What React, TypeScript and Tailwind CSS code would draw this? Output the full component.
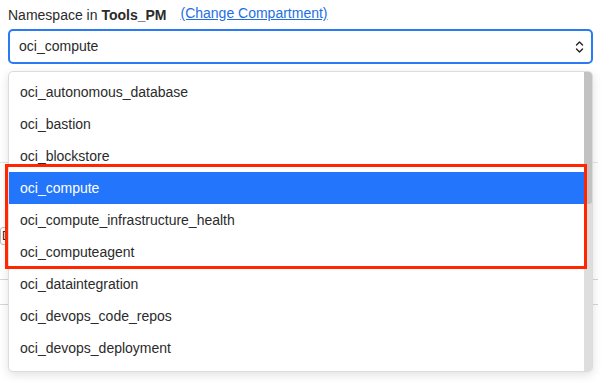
import { useState } from 'react';

const namespaces = [
  'oci_autonomous_database',
  'oci_bastion',
  'oci_blockstore',
  'oci_compute',
  'oci_compute_infrastructure_health',
  'oci_computeagent',
  'oci_dataintegration',
  'oci_devops_code_repos',
  'oci_devops_deployment',
];

function UpDownIcon() {
  return (
    <svg width="9" height="14" viewBox="0 0 9 14" fill="none" stroke="#222" strokeWidth="1.4" strokeLinecap="round" strokeLinejoin="round">
      <path d="M1.5 5 L4.5 2 L7.5 5" />
      <path d="M1.5 9 L4.5 12 L7.5 9" />
    </svg>
  );
}

export default function App() {
  const [selected] = useState('oci_compute');

  return (
    <div className="relative h-[383px] w-[610px] overflow-hidden bg-white font-['Liberation_Sans',Arial,sans-serif] text-[14px] text-[#2b2b2b]">
      <div className="flex h-[29px] items-start gap-[14px] px-2 pt-[7px] leading-[17px]">
        <span>
          Namespace in <b className="font-bold">Tools_PM</b>
        </span>
        <a className="-mt-[2px] text-[14px] text-[#1d6fe3] underline">(Change Compartment)</a>
      </div>

      <div className="mx-2 flex h-[35px] w-[585px] items-center justify-between rounded-[5px] border-2 border-[#2a7af6] pl-[9px] pr-[7px]">
        <span>{selected}</span>
        <UpDownIcon />
      </div>

      {/* content behind the open list */}
      <div className="mt-[98px] w-[598px] border-t border-[#e3e3e3]">
        <div className="mt-[64px] h-[18px] w-[40px] rounded-[3px] border border-[#bbb] pl-[1px] text-[12px] leading-[16px]">
          Del
        </div>
        <div className="h-[35px] border-b border-[#d6d6d6]" />
        <div className="h-[25px] border-b border-[#d6d6d6]" />
      </div>

      {/* open list */}
      <div className="absolute left-2 top-[71px] flex h-[301px] w-[585px] overflow-hidden rounded-[5px] border border-[#dcdcdc] bg-white shadow-[0_3px_10px_rgba(0,0,0,0.12)]">
        <ul className="flex-1 pt-[4px]">
          {namespaces.map((ns) => (
            <li
              key={ns}
              className={
                ns === selected
                  ? 'flex h-[32px] items-center bg-[#2376fc] pl-[11px] text-white'
                  : 'flex h-[32px] items-center pl-[11px]'
              }
            >
              {ns}
            </li>
          ))}
        </ul>
        <div className="w-[8px] bg-[#dedede]">
          <div className="h-[132px] rounded-b-[3px] bg-[#c2c2c2]" />
        </div>
      </div>

      {/* highlight */}
      <div className="absolute left-[5px] top-[164px] h-[105px] w-[582px] border-[3px] border-[#ff2600]" />
    </div>
  );
}
